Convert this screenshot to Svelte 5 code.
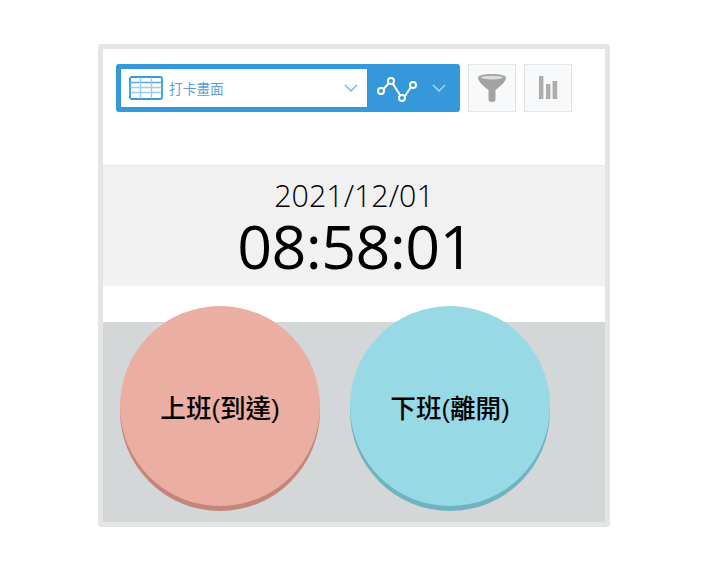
<script>
  const date = '2021/12/01';
  const time = '08:58:01';
</script>

<div class="page">
  <div class="frame">
    <div class="toolbar">
      <div class="selector">
        <div class="view">
          <svg class="table-icon" width="34" height="24" viewBox="0 0 34 24" fill="none">
            <rect x="1" y="1" width="32" height="22" rx="2" fill="#fff" stroke="#3498db" stroke-width="1.8"/>
            <path d="M1.5 6.5H32.5" stroke="#5dade2" stroke-width="1.6"/>
            <path d="M1.5 11.5H32.5M1.5 16.5H32.5" stroke="#9ccdee" stroke-width="1.6"/>
            <path d="M11.5 1.5V22.5M22.5 1.5V22.5" stroke="#9ccdee" stroke-width="1.4"/>
          </svg>
          <span class="view-name">打卡畫面</span>
          <svg class="chev" width="14" height="8" viewBox="0 0 14 8" fill="none"><path d="M1 1L7 7L13 1" stroke="#6db4e6" stroke-width="1.3"/></svg>
        </div>
        <div class="graph">
          <svg width="42" height="28" viewBox="0 0 42 28" fill="none" stroke="#fff" stroke-width="2">
            <path d="M6.5 15L12 9M16 10L23 21M28 22L34 13"/>
            <circle cx="4" cy="17" r="3"/>
            <circle cx="14" cy="7" r="3"/>
            <circle cx="25" cy="24" r="3"/>
            <circle cx="36" cy="11" r="3"/>
          </svg>
          <svg class="chev-2" width="14" height="8" viewBox="0 0 14 8" fill="none"><path d="M1 1L7 7L13 1" stroke="#b5d9f3" stroke-width="1.3"/></svg>
        </div>
      </div>
      <button class="tool" aria-label="filter">
        <svg width="30" height="30" viewBox="0 0 30 30">
          <path d="M1 5C1 2 7 1 15 1S29 2 29 5C29 8 24 13 18.5 17V27C18.5 29.5 11.5 29.5 11.5 27V17C6 13 1 8 1 5Z" fill="#a3a3a3"/>
          <ellipse cx="15" cy="4.6" rx="11" ry="1.8" fill="#dcdcdc"/>
        </svg>
      </button>
      <button class="tool" aria-label="chart">
        <svg width="20" height="24" viewBox="0 0 20 24" fill="#adadad">
          <rect x="1" y="0" width="4.4" height="23"/>
          <rect x="8" y="8" width="4.4" height="15"/>
          <rect x="14.6" y="5" width="4.6" height="18"/>
        </svg>
      </button>
    </div>

    <div class="clock">
      <div class="date">{date}</div>
      <div class="time">{time}</div>
    </div>

    <div class="spacer"></div>

    <div class="actions">
      <button class="punch in">上班(到達)</button>
      <button class="punch out">下班(離開)</button>
    </div>
  </div>
</div>

<style>
  :global(body) {
    margin: 0;
    background: #fff;
  }
  .page {
    padding: 44px 99px 45px 98px;
    font-family: "Open Sans", "Noto Sans CJK TC", sans-serif;
  }
  .frame {
    width: 502px;
    border: 5px solid #e5e5e5;
    border-radius: 3px;
    background: #fff;
  }
  .toolbar {
    height: 117px;
    box-sizing: border-box;
    padding: 15px 0 0 13px;
    display: flex;
    align-items: flex-start;
    gap: 8px;
    border-bottom: 1px solid #e6e9e9;
  }
  .selector {
    width: 344px;
    height: 48px;
    box-sizing: border-box;
    padding: 5px 0 5px 5px;
    display: flex;
    background: #3498db;
    border-radius: 3px;
  }
  .view {
    width: 246px;
    background: #fff;
    display: flex;
    align-items: center;
    padding-left: 8px;
    box-sizing: border-box;
  }
  .view-name {
    margin-left: 6px;
    font-size: 13.7px;
    color: #5a9fd8;
    font-family: "Noto Sans CJK TC", sans-serif;
    flex: 1;
  }
  .chev {
    margin-right: 9px;
  }
  .graph {
    flex: 1;
    display: flex;
    align-items: center;
    padding-left: 10px;
  }
  .chev-2 {
    margin-left: 13px;
  }
  .tool {
    width: 48px;
    height: 48px;
    padding: 0;
    box-sizing: border-box;
    background: #f7f9fa;
    border: 1px solid #e3e7e8;
    display: flex;
    align-items: center;
    justify-content: center;
  }
  .clock {
    height: 120px;
    background: #f1f1f1;
    text-align: center;
    color: #000;
  }
  .date {
    font-size: 30.4px;
    font-weight: 300;
    line-height: 30px;
    padding-top: 15px;
  }
  .time {
    font-size: 61px;
    font-weight: 400;
    letter-spacing: -0.6px;
    line-height: 70px;
    padding-left: 3px;
  }
  .spacer {
    height: 36px;
  }
  .actions {
    height: 200px;
    background: #d3d7d8;
    display: flex;
    gap: 30px;
    padding-left: 17px;
  }
  .punch {
    width: 200px;
    height: 200px;
    margin-top: -16px;
    padding: 0;
    border: none;
    border-radius: 50%;
    font-family: "Liberation Sans", "Noto Sans CJK TC", sans-serif;
    font-size: 25.6px;
    font-weight: 500;
    color: #000;
  }
  .in {
    background: #ebaea3;
    box-shadow: 0 5px 0 #c48679;
  }
  .out {
    background: #98d9e6;
    box-shadow: 0 5px 0 #6fb3c0;
  }
</style>
